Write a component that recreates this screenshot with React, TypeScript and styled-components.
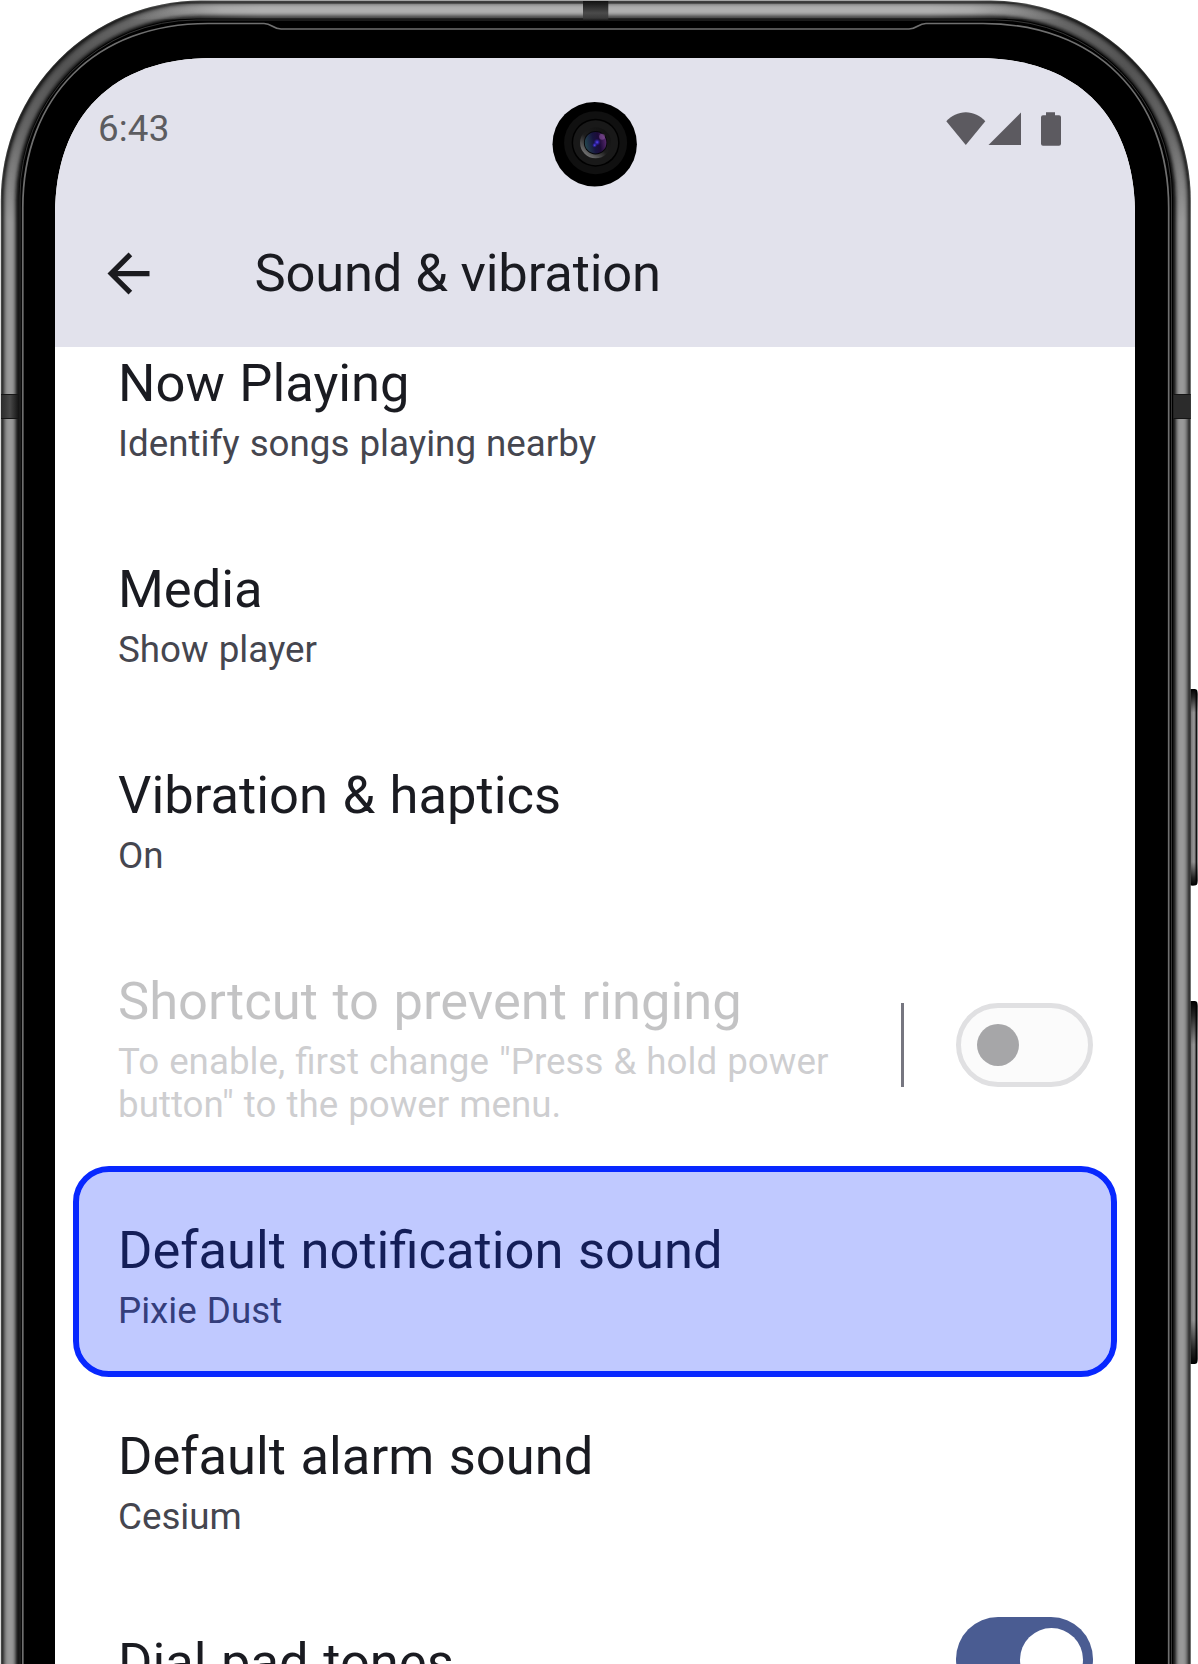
import React from "react";
import styled, { createGlobalStyle } from "styled-components";

const GlobalStyle = createGlobalStyle`
  * { box-sizing: border-box; }
  body { margin: 0; background: #fff; font-family: Roboto, "Liberation Sans", sans-serif; }
`;

const Device = styled.div`
  position: relative;
  width: 1198px;
  height: 1664px;
  overflow: hidden;
  padding: 58px 63px 0 55px;
`;

const FrameArt = styled.svg`
  position: absolute;
  inset: 0;
  display: block;
`;

const CameraArt = styled.svg`
  position: absolute;
  left: 552px;
  top: 100px;
  z-index: 3;
`;

const Screen = styled.main`
  position: relative;
  display: flex;
  flex-direction: column;
  width: 1080px;
  height: 1606px;
  overflow: hidden;
  background: #fff;
  clip-path: path("M0 1606V157C0 58 58 0 157 0H923C1022 0 1080 58 1080 157V1606Z");
`;

const Header = styled.header`
  position: relative;
  z-index: 2;
  flex: none;
  height: 289px;
  background: #e2e2ec;
`;

const StatusBar = styled.div`
  display: flex;
  align-items: center;
  justify-content: space-between;
  height: 140px;
  padding: 0 74px 0 43px;
`;

const Clock = styled.time`
  font-size: 36.75px;
  line-height: 43px;
  letter-spacing: 0.15px;
  color: #5c5c60;
`;

const StatusIcons = styled.div`
  display: flex;
  align-items: center;
  padding-top: 2px;
  svg { display: block; }
`;

const AppBar = styled.div`
  display: flex;
  align-items: center;
  height: 150px;
  padding-left: 42px;
  svg { display: block; }
`;

const ScreenTitle = styled.h1`
  margin: 0 0 0 94.5px;
  font-size: 52.5px;
  line-height: 62px;
  font-weight: 400;
  letter-spacing: -0.17px;
  color: #1a1b21;
`;

const List = styled.div`
  flex: 1;
  margin-top: -41px;
  display: flex;
  flex-direction: column;
`;

const Row = styled.section<{ $highlighted?: boolean }>`
  position: relative;
  flex: none;
  display: flex;
  align-items: flex-start;
  padding: 46px 42px 47px 63px;

  ${(p) =>
    p.$highlighted &&
    `&::after {
      content: "";
      position: absolute;
      inset: -7px 18px 2px 18px;
      border: 6px solid #0828ff;
      border-radius: 36px;
      background: rgba(3, 41, 255, 0.25);
      background-clip: padding-box;
    }`}
`;

const RowText = styled.div<{ $disabled?: boolean }>`
  flex: 1;
  display: flex;
  flex-direction: column;
  gap: 8px;
  opacity: ${(p) => (p.$disabled ? 0.26 : 1)};
`;

const RowTitle = styled.h2`
  margin: 0;
  font-size: 52.5px;
  line-height: 62px;
  font-weight: 400;
  word-spacing: 1.5px;
  color: #1a1b21;
`;

const RowSummary = styled.p`
  margin: 0;
  font-size: 36.75px;
  line-height: 43px;
  word-spacing: 0.9px;
  color: #45464f;
`;

const Divider = styled.div`
  flex: none;
  width: 3px;
  height: 84px;
  margin: 33px 52px 0 40px;
  background: #767680;
`;

const Switch = styled.div<{ $on?: boolean; $top: number }>`
  flex: none;
  display: flex;
  align-items: center;
  justify-content: ${(p) => (p.$on ? "flex-end" : "flex-start")};
  width: 137px;
  height: 84px;
  margin-top: ${(p) => p.$top}px;
  padding: 0 ${(p) => (p.$on ? "10.5px" : "16px")};
  border: ${(p) => (p.$on ? "0" : "5px solid #e0e0e2")};
  border-radius: 42px;
  background: ${(p) => (p.$on ? "#4a5c92" : "#fbfbfb")};
`;

const Thumb = styled.span<{ $on?: boolean }>`
  width: ${(p) => (p.$on ? 63 : 42)}px;
  height: ${(p) => (p.$on ? 63 : 42)}px;
  border-radius: 50%;
  background: ${(p) => (p.$on ? "#fff" : "#a6a6a8")};
`;

/* Shades of the metal rim, one per pixel from the outer edge inwards. */
const rim = [
  "#4c4d4c", "#303030", "#444", "#606060", "#767676", "#888", "#929292", "#979797", "#9a9a9a",
  "#9a9a9a", "#989898", "#959595", "#8b8b8b", "#777", "#5c5c5c", "#3c3c3c", "#242424", "#161616",
];

function Frame() {
  return (
    <FrameArt width="1198" height="1664" viewBox="0 0 1198 1664">
      <defs>
        <radialGradient id="shade">
          <stop offset="0" stopColor="#000" stopOpacity=".46" />
          <stop offset=".45" stopColor="#000" stopOpacity=".34" />
          <stop offset="1" stopColor="#000" stopOpacity="0" />
        </radialGradient>
        <linearGradient id="shine" x1="0" x2="1" y1="0" y2="0">
          <stop offset="0" stopColor="#fff" stopOpacity="0" />
          <stop offset=".15" stopColor="#fff" stopOpacity=".22" />
          <stop offset=".85" stopColor="#fff" stopOpacity=".22" />
          <stop offset="1" stopColor="#fff" stopOpacity="0" />
        </linearGradient>
        <linearGradient id="antenna" x1="0" x2="0" y1="0" y2="1">
          <stop offset="0" stopColor="#111" />
          <stop offset=".6" stopColor="#4b4b4b" />
          <stop offset=".85" stopColor="#3a3a3a" />
          <stop offset="1" stopColor="#111" />
        </linearGradient>
        <linearGradient id="side" x1="0" x2="1" y1="0" y2="0">
          <stop offset="0" stopColor="#2a2a2a" />
          <stop offset=".5" stopColor="#484848" />
          <stop offset="1" stopColor="#111" />
        </linearGradient>
        <linearGradient id="key" x1="0" x2="1" y1="0" y2="0">
          <stop offset="0" stopColor="#777" />
          <stop offset=".5" stopColor="#999" />
          <stop offset=".7" stopColor="#777" />
          <stop offset=".85" stopColor="#111" />
          <stop offset="1" stopColor="#111" />
        </linearGradient>
        <linearGradient id="keyEnds" x1="0" x2="0" y1="0" y2="1">
          <stop offset="0" stopColor="#000" />
          <stop offset=".04" stopColor="#000" stopOpacity=".75" />
          <stop offset=".12" stopColor="#000" stopOpacity="0" />
          <stop offset=".88" stopColor="#000" stopOpacity="0" />
          <stop offset=".96" stopColor="#000" stopOpacity=".75" />
          <stop offset="1" stopColor="#000" />
        </linearGradient>
        <clipPath id="body">
          <rect x=".8" y=".6" width="1190" height="2200" rx="200" />
        </clipPath>
      </defs>
      {[[689, 196.5], [1001, 363]].map(([y, h]) => (
        <g key={y}>
          <rect x="1186" y={y} width="11.5" height={h} rx="5" fill="#111" />
          <rect x="1191" y={y + 1} width="6" height={h - 2} rx="2" fill="url(#key)" />
          <rect x="1190" y={y} width="7.5" height={h} rx="3" fill="url(#keyEnds)" />
        </g>
      ))}
      {rim.map((color, i) => (
        <rect key={i} x={0.8 + i} y={0.6 + i} width={1190 - 2 * i} height="2200" rx={200 - i} fill={color} />
      ))}
      <circle cx="68" cy="68" r="165" fill="url(#shade)" clipPath="url(#body)" />
      <circle cx="1124" cy="68" r="165" fill="url(#shade)" clipPath="url(#body)" />
      <rect x="120" y="4" width="952" height="15" fill="url(#shine)" clipPath="url(#body)" />
      <rect x="19" y="18.5" width="1154" height="2200" rx="178" fill="#000" />
      <rect x="20" y="20" width="1151.5" height="2200" rx="176" fill="none" stroke="#3b3b3b" strokeWidth=".9" />
      <path
        d="M22.8 1664V208C22.8 96 96 23.5 208 23.5H264C272 23.5 273 29 281 29H909C917 29 918 23.5 926 23.5H983C1095 23.5 1168.700 96 1168.700 208V1664"
        fill="none"
        stroke="#6f6f6f"
        strokeWidth="1.7"
      />
      <rect x="583" y="1" width="25.3" height="20" fill="url(#antenna)" />
      <rect x="1" y="394" width="18" height="25" fill="url(#side)" />
      <rect x="1173.5" y="394" width="17.3" height="25" fill="#2b2b2b" />
      <path d="M1 394.5h18M1 418.5h18M1173.5 394.5h17M1173.5 418.5h17" stroke="#151515" />
    </FrameArt>
  );
}

function Camera() {
  return (
    <CameraArt width="88" height="88" viewBox="-43.6 -42.7 88 88">
      <defs>
        <linearGradient id="bevel" x1=".9" y1=".1" x2=".2" y2=".95">
          <stop offset="0" stopColor="#111" />
          <stop offset=".55" stopColor="#1d1d1d" />
          <stop offset="1" stopColor="#777" />
        </linearGradient>
        <linearGradient id="glass" x1="0" y1=".5" x2="1" y2=".3">
          <stop offset="0" stopColor="#24454d" />
          <stop offset=".4" stopColor="#17153f" />
          <stop offset=".65" stopColor="#1c0b38" />
          <stop offset="1" stopColor="#5b2a70" />
        </linearGradient>
        <radialGradient id="glow">
          <stop offset="0" stopColor="#5a48ff" />
          <stop offset="1" stopColor="#2a1acc" stopOpacity="0" />
        </radialGradient>
      </defs>
      <circle cx="-.9" cy="1.5" r="42.2" fill="#000" />
      <circle r="31.5" fill="#101010" />
      <circle r="24" fill="#000" />
      <circle r="22.5" fill="#191919" />
      <circle r="15.5" fill="url(#bevel)" />
      <circle r="11.7" fill="#050508" />
      <circle r="10.8" fill="url(#glass)" />
      <circle cx="6.5" cy="-6" r="3" fill="#b070c0" opacity=".4" />
      <circle cx="1.5" cy="-.5" r="3.5" fill="url(#glow)" />
      <circle cx="-1" cy="2.5" r="2.5" fill="url(#glow)" />
    </CameraArt>
  );
}

type Item = {
  title: string;
  summary?: string;
  highlighted?: boolean;
  disabled?: boolean;
  control?: React.ReactNode;
};

const items: Item[] = [
  { title: "Now Playing", summary: "Identify songs playing nearby" },
  { title: "Media", summary: "Show player" },
  { title: "Vibration & haptics", summary: "On" },
  {
    title: "Shortcut to prevent ringing",
    summary: 'To enable, first change "Press & hold power button" to the power menu.',
    disabled: true,
    control: (
      <>
        <Divider />
        <Switch $top={33}>
          <Thumb />
        </Switch>
      </>
    ),
  },
  { title: "Default notification sound", summary: "Pixie Dust", highlighted: true },
  { title: "Default alarm sound", summary: "Cesium" },
  {
    title: "Dial pad tones",
    control: (
      <Switch $on $top={-14}>
        <Thumb $on />
      </Switch>
    ),
  },
];

export default function App() {
  return (
    <>
      <GlobalStyle />
      <Device>
        <Frame />
        <Screen>
          <Header>
            <StatusBar>
              <Clock>6:43</Clock>
              <StatusIcons>
                <svg width="116" height="34" viewBox="0 0 116 34" fill="#5c5a60">
                  <path d="M20.8 32.9L1.3 9.3C6.3 3.8 13.300 .3 20.8 .3S35.300 3.800 40.300 9.300z" />
                  <path d="M43.5 33L76 .5V33z" />
                  <path d="M101 .2h9v3h4q2 0 2 2v26.500q0 2-2 2h-16q-2 0-2-2v-26.500q0-2 2-2h3z" />
                </svg>
              </StatusIcons>
            </StatusBar>
            <AppBar>
              <svg width="63" height="63" viewBox="0 0 24 24" fill="#1b1b1f">
                <path d="M20 11H7.830l5.590-5.590L12 4l-8 8 8 8 1.410-1.410L7.830 13H20z" />
              </svg>
              <ScreenTitle>Sound &amp; vibration</ScreenTitle>
            </AppBar>
          </Header>
          <List>
            {items.map((item) => (
              <Row key={item.title} $highlighted={item.highlighted}>
                <RowText $disabled={item.disabled}>
                  <RowTitle>{item.title}</RowTitle>
                  {item.summary && <RowSummary>{item.summary}</RowSummary>}
                </RowText>
                {item.control}
              </Row>
            ))}
          </List>
        </Screen>
        <Camera />
      </Device>
    </>
  );
}
